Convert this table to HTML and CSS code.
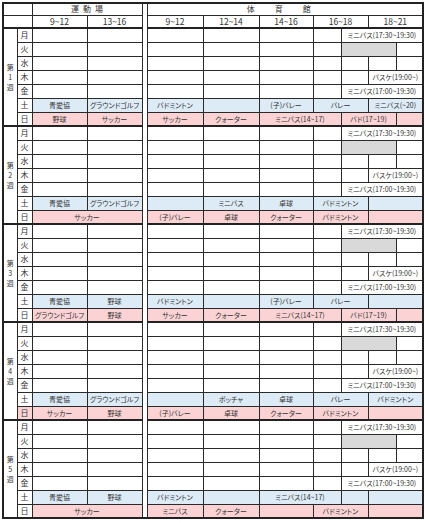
FILE: index.html
```html
<!DOCTYPE html>
<html lang="ja">
<head>
<meta charset="utf-8">
<title>施設利用予定表</title>
<link rel="stylesheet" href="styles.css">
</head>
<body>
<table class="sched">
<colgroup>
<col class="c-wk"><col class="c-d"><col class="c-g"><col class="c-g"><col class="c-gap"><col class="c-y1"><col class="c-y1"><col class="c-y2"><col class="c-h1"><col class="c-h2"><col class="c-h1"><col class="c-h2">
</colgroup>
<tr class="h1"><td colspan="2"></td><td colspan="2" class="ttl ttl-g">運動場</td><td rowspan="37" class="gap"></td><td colspan="7" class="ttl ttl-y">体育館</td></tr>
<tr class="h2"><td colspan="2"></td><td>9~12</td><td>13~16</td><td>9~12</td><td>12~14</td><td>14~16</td><td colspan="2">16~18</td><td colspan="2">18~21</td></tr>

<tr class="top"><td rowspan="7" class="wk">第<br>1<br>週</td><td class="d">月</td><td></td><td></td><td></td><td></td><td></td><td></td><td colspan="3">ミニバス(17:30~19:30)</td></tr>
<tr><td class="d">火</td><td></td><td></td><td></td><td></td><td></td><td></td><td colspan="2" class="gr"></td><td></td></tr>
<tr><td class="d">水</td><td></td><td></td><td></td><td></td><td></td><td></td><td></td><td></td><td></td></tr>
<tr><td class="d">木</td><td></td><td></td><td></td><td></td><td></td><td></td><td></td><td colspan="2">バスケ(19:00~)</td></tr>
<tr><td class="d">金</td><td></td><td></td><td></td><td></td><td></td><td></td><td colspan="3">ミニバス(17:00~19:30)</td></tr>
<tr class="sat"><td class="d">土</td><td class="b">青愛協</td><td class="b">グラウンドゴルフ</td><td class="b">バドミントン</td><td class="b"></td><td class="b">(子)バレー</td><td colspan="2" class="b">バレー</td><td colspan="2" class="b">ミニバス(~20)</td></tr>
<tr class="sun"><td class="d">日</td><td class="p">野球</td><td class="p">サッカー</td><td class="p">サッカー</td><td class="p">クォーター</td><td colspan="2" class="p">ミニバス(14~17)</td><td colspan="2" class="p">バド(17~19)</td><td class="p"></td></tr>

<tr class="top"><td rowspan="7" class="wk">第<br>2<br>週</td><td class="d">月</td><td></td><td></td><td></td><td></td><td></td><td></td><td colspan="3">ミニバス(17:30~19:30)</td></tr>
<tr><td class="d">火</td><td></td><td></td><td></td><td></td><td></td><td></td><td colspan="2" class="gr"></td><td></td></tr>
<tr><td class="d">水</td><td></td><td></td><td></td><td></td><td></td><td></td><td></td><td></td><td></td></tr>
<tr><td class="d">木</td><td></td><td></td><td></td><td></td><td></td><td></td><td></td><td colspan="2">バスケ(19:00~)</td></tr>
<tr><td class="d">金</td><td></td><td></td><td></td><td></td><td></td><td></td><td colspan="3">ミニバス(17:00~19:30)</td></tr>
<tr class="sat"><td class="d">土</td><td class="b">青愛協</td><td class="b">グラウンドゴルフ</td><td class="b"></td><td class="b">ミニバス</td><td class="b">卓球</td><td colspan="2" class="b">バドミントン</td><td colspan="2" class="b"></td></tr>
<tr class="sun"><td class="d">日</td><td colspan="2" class="p">サッカー</td><td class="p">(子)バレー</td><td class="p">卓球</td><td class="p">クォーター</td><td colspan="2" class="p">バドミントン</td><td colspan="2" class="p"></td></tr>

<tr class="top"><td rowspan="7" class="wk">第<br>3<br>週</td><td class="d">月</td><td></td><td></td><td></td><td></td><td></td><td></td><td colspan="3">ミニバス(17:30~19:30)</td></tr>
<tr><td class="d">火</td><td></td><td></td><td></td><td></td><td></td><td></td><td colspan="2" class="gr"></td><td></td></tr>
<tr><td class="d">水</td><td></td><td></td><td></td><td></td><td></td><td></td><td></td><td></td><td></td></tr>
<tr><td class="d">木</td><td></td><td></td><td></td><td></td><td></td><td></td><td></td><td colspan="2">バスケ(19:00~)</td></tr>
<tr><td class="d">金</td><td></td><td></td><td></td><td></td><td></td><td></td><td colspan="3">ミニバス(17:00~19:30)</td></tr>
<tr class="sat"><td class="d">土</td><td class="b">青愛協</td><td class="b">野球</td><td class="b">バドミントン</td><td class="b"></td><td class="b">(子)バレー</td><td colspan="2" class="b">バレー</td><td colspan="2" class="b"></td></tr>
<tr class="sun"><td class="d">日</td><td class="p">グラウンドゴルフ</td><td class="p">野球</td><td class="p">サッカー</td><td class="p">クォーター</td><td colspan="2" class="p">ミニバス(14~17)</td><td colspan="2" class="p">バド(17~19)</td><td class="p"></td></tr>

<tr class="top"><td rowspan="7" class="wk">第<br>4<br>週</td><td class="d">月</td><td></td><td></td><td></td><td></td><td></td><td></td><td colspan="3">ミニバス(17:30~19:30)</td></tr>
<tr><td class="d">火</td><td></td><td></td><td></td><td></td><td></td><td></td><td colspan="2" class="gr"></td><td></td></tr>
<tr><td class="d">水</td><td></td><td></td><td></td><td></td><td></td><td></td><td></td><td></td><td></td></tr>
<tr><td class="d">木</td><td></td><td></td><td></td><td></td><td></td><td></td><td></td><td colspan="2">バスケ(19:00~)</td></tr>
<tr><td class="d">金</td><td></td><td></td><td></td><td></td><td></td><td></td><td colspan="3">ミニバス(17:00~19:30)</td></tr>
<tr class="sat"><td class="d">土</td><td class="b">青愛協</td><td class="b">グラウンドゴルフ</td><td class="b"></td><td class="b">ボッチャ</td><td class="b">卓球</td><td colspan="2" class="b">バレー</td><td colspan="2" class="b">バドミントン</td></tr>
<tr class="sun"><td class="d p">日</td><td class="p">サッカー</td><td class="p">野球</td><td class="p">(子)バレー</td><td class="p">卓球</td><td class="p">クォーター</td><td colspan="2" class="p">バドミントン</td><td colspan="2" class="p"></td></tr>

<tr class="top"><td rowspan="7" class="wk">第<br>5<br>週</td><td class="d">月</td><td></td><td></td><td></td><td></td><td></td><td></td><td colspan="3">ミニバス(17:30~19:30)</td></tr>
<tr><td class="d">火</td><td></td><td></td><td></td><td></td><td></td><td></td><td colspan="2" class="gr"></td><td></td></tr>
<tr><td class="d">水</td><td></td><td></td><td></td><td></td><td></td><td></td><td></td><td></td><td></td></tr>
<tr><td class="d">木</td><td></td><td></td><td></td><td></td><td></td><td></td><td></td><td colspan="2">バスケ(19:00~)</td></tr>
<tr><td class="d">金</td><td></td><td></td><td></td><td></td><td></td><td></td><td colspan="3">ミニバス(17:00~19:30)</td></tr>
<tr class="sat"><td class="d">土</td><td class="b">青愛協</td><td class="b">野球</td><td class="b">バドミントン</td><td class="b"></td><td colspan="2" class="b">ミニバス(14~17)</td><td class="b"></td><td colspan="2" class="b"></td></tr>
<tr class="sun"><td class="d">日</td><td colspan="2" class="p">サッカー</td><td class="p">ミニバス</td><td class="p">クォーター</td><td class="p"></td><td colspan="2" class="p">バドミントン</td><td colspan="2" class="p"></td></tr>
</table>
</body>
</html>
```
FILE: styles.css
```css
html, body {
  margin: 0;
  padding: 0;
  background: #ffffff;
}
body {
  font-family: "Noto Sans CJK JP", "Noto Sans", sans-serif;
  color: #333333;
}
.sched {
  border-collapse: collapse;
  table-layout: fixed;
  width: 421px;
  margin: 2px 0 0 2px;
  border: 2px solid #222222;
  font-feature-settings: "palt";
}
.c-wk { width: 14px; }
.c-d { width: 15px; }
.c-g { width: 55px; }
.c-gap { width: 5px; }
.c-y1 { width: 56px; }
.c-y2 { width: 54px; }
.c-h1 { width: 28px; }
.c-h2 { width: 27px; }
.sched td {
  border: 1px solid #2a2a2a;
  padding: 0;
  font-size: 7px;
  line-height: 8px;
  text-align: center;
  vertical-align: middle;
  white-space: nowrap;
  overflow: hidden;
}
.sched tr { height: 14px; }
.sched tr.h1 { height: 12px; }
.sched tr.h2 { height: 13px; }
.sched .h2 td { font-size: 8.5px; }
.sched td.ttl { font-size: 8px; }
.sched td.ttl-g { letter-spacing: 4px; padding-left: 4px; }
.sched td.ttl-y { letter-spacing: 20px; padding-left: 8px; }
.sched td.gap {
  border-top: 2px solid #222222;
  border-bottom: 2px solid #222222;
  border-left: 1px solid #2a2a2a;
  border-right: 1px solid #2a2a2a;
}
.sched tr.top td { border-top: 2px solid #222222; }
.sched td.wk {
  font-size: 7px;
  line-height: 10.2px;
}
.sched td.d { font-size: 8px; }
.sched td.b { background: #ddebf7; }
.sched td.p { background: #fbd3d5; }
.sched td.gr { background: #d9d9d9; }
```
